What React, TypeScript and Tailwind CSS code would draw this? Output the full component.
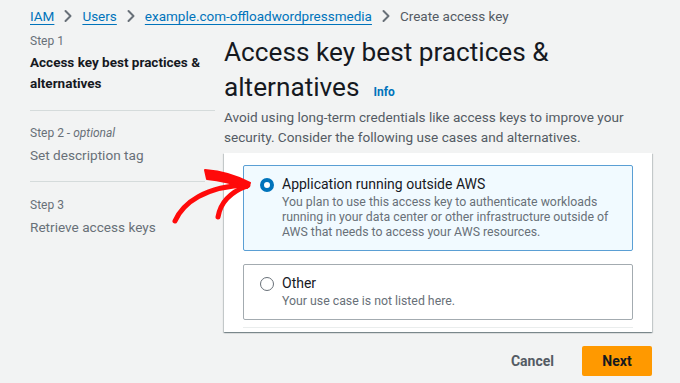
import React from "react";

const FONT = { fontFamily: "Roboto, 'Open Sans', Arial, sans-serif" };

function Chevron() {
  return (
    <svg width="10" height="14" viewBox="0 0 10 14" className="mx-[9px] shrink-0">
      <polyline points="2.5,2 7.5,7 2.5,12" fill="none" stroke="#687078" strokeWidth="2" strokeLinecap="round" strokeLinejoin="round" />
    </svg>
  );
}

function Radio({ checked }: { checked: boolean }) {
  return checked ? (
    <span className="mt-[3px] block h-[14px] w-[14px] shrink-0 rounded-full border-[4px] border-[#0073bb] bg-white" />
  ) : (
    <span className="mt-[3px] block h-[14px] w-[14px] shrink-0 rounded-full border-[1.5px] border-[#687078] bg-white" />
  );
}

function Tile({ checked, title, desc }: { checked: boolean; title: string; desc: string }) {
  return (
    <div
      className={
        checked
          ? "flex gap-[8px] rounded-[2px] border border-[#5a9fd4] bg-[#f1faff] pb-[10px] pl-[16px] pr-[12px] pt-[9px]"
          : "flex gap-[8px] rounded-[2px] border border-[#a3abb0] bg-white pb-[10px] pl-[16px] pr-[12px] pt-[9px]"
      }
    >
      <Radio checked={checked} />
      <div>
        <div className="text-[14px] leading-[19px] text-[#16191f]">{title}</div>
        <div className="mt-[1px] text-[12.3px] leading-[15px] text-[#687078]">{desc}</div>
      </div>
    </div>
  );
}

export default function App() {
  return (
    <div className="relative h-[383px] w-[680px] overflow-hidden bg-[#f2f3f3]" style={FONT}>
      <nav className="flex h-[30px] items-center pl-[30px] pt-[2px] text-[13.5px] leading-[20px]">
        <a className="text-[#0073bb] underline underline-offset-[3px]">IAM</a>
        <Chevron />
        <a className="text-[#0073bb] underline underline-offset-[3px]">Users</a>
        <Chevron />
        <a className="text-[#0073bb] underline underline-offset-[3px]">example.com-offloadwordpressmedia</a>
        <Chevron />
        <span className="text-[#545b64]">Create access key</span>
      </nav>

      <div className="flex gap-[9px] pl-[30px] pt-[2px]">
        <aside className="w-[185px] shrink-0">
          <div className="text-[12px] leading-[18px] text-[#687078]">Step 1</div>
          <div className="mt-[2px] text-[13.5px] font-bold leading-[21px] text-[#16191f]">
            Access key best practices &amp; alternatives
          </div>
          <div className="mt-[16px] h-px w-[185px] bg-[#d5dbdb]" />
          <div className="mt-[13px] text-[12px] leading-[18px] text-[#687078]">
            Step 2 - <i>optional</i>
          </div>
          <div className="mt-[3px] text-[13.6px] leading-[20px] text-[#687078]">Set description tag</div>
          <div className="mt-[16px] h-px w-[175px] bg-[#d5dbdb]" />
          <div className="mt-[14px] text-[12px] leading-[18px] text-[#687078]">Step 3</div>
          <div className="mt-[3px] text-[13.6px] leading-[20px] text-[#687078]">Retrieve access keys</div>
        </aside>

        <main className="w-[428px] shrink-0">
          <h1 className="mt-[3px] text-[26.2px] font-normal leading-[35px] text-[#16191f]">
            Access key best practices &amp; alternatives
            <span className="ml-[14px] text-[12px] font-bold leading-[16px] text-[#0073bb]">Info</span>
          </h1>
          <p className="mt-[2px] text-[13.6px] leading-[20px] text-[#545b64]">
            Avoid using long-term credentials like access keys to improve your security. Consider the following use cases and alternatives.
          </p>

          <section className="mt-[6px] bg-white px-[19px] pb-[4px] pt-[12px] shadow-[0_1px_1px_0_rgba(0,28,36,0.3),1px_1px_1px_0_rgba(0,28,36,0.15),-1px_1px_1px_0_rgba(0,28,36,0.15)]">
            <div className="flex flex-col gap-[13px]">
              <Tile
                checked
                title="Application running outside AWS"
                desc="You plan to use this access key to authenticate workloads running in your data center or other infrastructure outside of AWS that needs to access your AWS resources."
              />
              <Tile checked={false} title="Other" desc="Your use case is not listed here." />
            </div>
            <div className="mt-[7px] h-px bg-[#eaeded]" />
          </section>

          <div className="mt-[14px] flex items-center justify-end gap-[28px]">
            <button className="text-[14px] font-bold text-[#545b64]">Cancel</button>
            <button className="h-[30px] w-[70px] rounded-[2px] bg-[#ff9900] text-[14px] font-bold text-[#16191f]">Next</button>
          </div>
        </main>
      </div>

      <svg className="pointer-events-none absolute left-0 top-0" width="680" height="383" viewBox="0 0 680 383">
        <path d="M175 221 C 183 203, 205 186, 248 185" fill="none" stroke="#ff0a0a" strokeWidth="5" strokeLinecap="round" />
        <path d="M218 217 C 220 205, 228 193, 247 186" fill="none" stroke="#ff0a0a" strokeWidth="5" strokeLinecap="round" />
        <path d="M205 170 Q 230 172 250 183 L 247 188 Q 226 181 207 179 Z" fill="#ff0a0a" stroke="#ff0a0a" strokeWidth="2" strokeLinejoin="round" />
      </svg>
    </div>
  );
}
